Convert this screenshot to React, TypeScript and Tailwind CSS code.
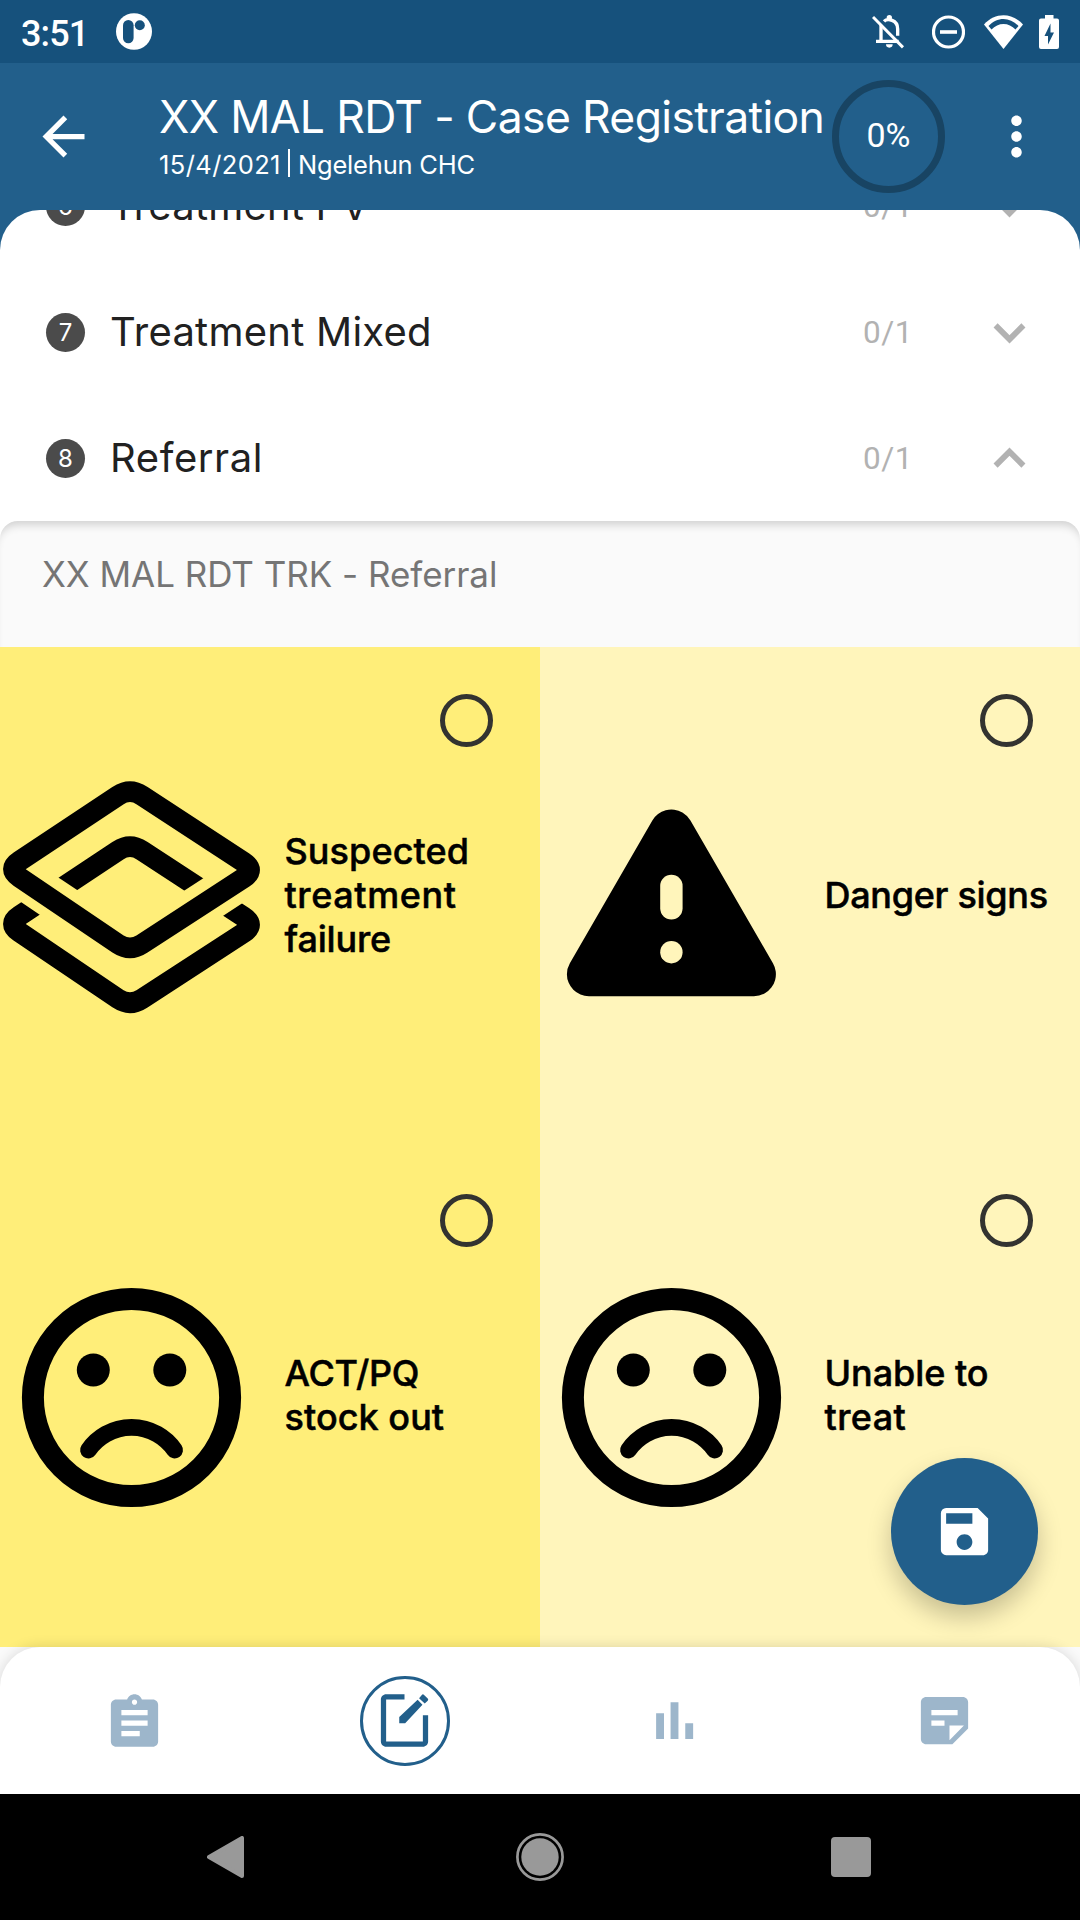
import type { ReactNode } from 'react';
import { MdArrowBack, MdMoreVert, MdSave } from 'react-icons/md';

function StatusBar() {
  return (
    <div className="flex h-[63px] items-center bg-[#16517c] pr-[21px] pl-[21px] text-white">
      <span className="mt-[5px] w-[95px] font-[Roboto,sans-serif] text-[36px] leading-[42px] font-medium tracking-[-0.900px]">3:51</span>
      <svg className="h-[37px] w-[36px]" viewBox="0 0 36 37">
        <ellipse cx="18" cy="18.5" rx="18" ry="18.3" fill="#fff" />
        <rect x="7" y="7" width="10.6" height="23.3" rx="5.3" fill="#16517c" />
        <circle cx="23.8" cy="12.3" r="5" fill="#16517c" />
      </svg>
      <div className="ml-auto flex items-center">
        <svg className="mr-[28px] h-[34px] w-[32px]" viewBox="0 0 96 102" fill="none" stroke="#fff">
          <path d="M27 30V78M12 79H80" strokeWidth="10" />
          <path d="M36 19C46 9 77 14 77 42V62" strokeWidth="10" />
          <path d="M3 6L93 97" strokeWidth="9" />
          <circle cx="52" cy="8" r="8" fill="#fff" stroke="none" />
          <path d="M42 88h20a10 10 0 0 1-20 0z" fill="#fff" stroke="none" />
        </svg>
        <svg className="mr-[19px] h-[34px] w-[33px]" viewBox="0 0 33 34" fill="none" stroke="#fff">
          <circle cx="16.5" cy="17" r="15" strokeWidth="3.2" />
          <path d="M8 17h17" strokeWidth="3.6" />
        </svg>
        <svg className="mr-[16px] h-[34px] w-[39px]" viewBox="0 0 39 34">
          <path d="M0 9.5C11 -2.8 28 -2.8 39 9.5L19.5 34z" fill="#fff" />
          <path d="M4.500 11C13 1.500 26 1.500 34.500 11L31.500 14.500C25 7 14 7 7.500 14.500z" fill="#16517c" />
        </svg>
        <svg className="h-[34px] w-[20px]" viewBox="0 0 20 34">
          <path d="M6 0h8.500v3.500H18q2 0 2 2V32q0 2-2 2H2q-2 0-2-2V5.500q0-2 2-2H6z" fill="#fff" />
          <path d="M11.500 8.500L5.500 21H9v8.500L15 17.500h-3.500z" fill="#16517c" />
        </svg>
      </div>
    </div>
  );
}

function Header() {
  return (
    <header className="flex h-[147px] text-white">
      <MdArrowBack className="mt-[42px] ml-[32px] size-[63px] shrink-0" />
      <div className="mt-[27px] ml-[64px] w-[674px] shrink-0">
        <h1 className="text-[44.500px] leading-[55px] tracking-[-0.660px] whitespace-nowrap">XX MAL RDT - Case Registration</h1>
        <div className="mt-[4px] flex text-[25.500px] leading-[32px] whitespace-nowrap">
          <span className="w-[126px] tracking-[0.400px]">15/4/2021</span>
          <span className="mr-[8px] ml-[2.500px] h-[28px] w-[2.500px] bg-white" />
          <span className="tracking-[-0.200px]">Ngelehun CHC</span>
        </div>
      </div>
      <div className="mt-[17px] -ml-px flex size-[113px] shrink-0 items-center justify-center rounded-full border-[7px] border-[#184463] font-[Roboto,sans-serif] text-[34px]">
        <span className="-mt-[2px]">0%</span>
      </div>
      <MdMoreVert className="mt-[42px] ml-[39.500px] size-[63px] shrink-0" />
    </header>
  );
}

function StageRow({ index, title, open, titleClass }: { index: number; title: string; open?: boolean; titleClass: string }) {
  return (
    <div className="flex h-[126px] shrink-0 items-center pr-[39px] pl-[46px]">
      <span className="flex size-[39px] items-center justify-center rounded-full bg-[#4b4b4b] text-[24px] leading-none text-white">
        <span className="mt-[2px]">{index}</span>
      </span>
      <span className={`ml-[25px] flex-1 text-[40px] text-[#212121] ${titleClass}`}>{title}</span>
      <span className="mt-[2px] w-[115px] font-[Roboto,sans-serif] text-[31.500px] tracking-[0.500px] text-[#b2b2b2]">0/1</span>
      <svg className="size-[63px]" viewBox="0 0 24 24" fill="none" stroke="#b2b2b2" strokeWidth="2.2">
        <path d={open ? 'M6.700 14.700L12 9.400l5.300 5.300' : 'M6.700 9.300L12 14.600l5.300-5.300'} />
      </svg>
    </div>
  );
}

function LayersIcon() {
  const diamond = 'M118 29.600Q130 21.700 142 29.600L243.700 96.100Q255.700 104 243.700 111.900L142 178Q130 185.900 118 178L19.300 111.200Q7.300 103 19.300 95.100Z';
  return (
    <svg className="size-[263px] shrink-0" viewBox="0 0 263 263" fill="none" stroke="#000" strokeWidth="20.500">
      <clipPath id="chevronArea">
        <path d="M-10 66L130.600 159.500 270 69V-50H-10z" />
      </clipPath>
      <clipPath id="baseArea">
        <path d="M-10 115L130.600 210.500 270 119V263H-10z" />
      </clipPath>
      <path d={diamond} />
      <g clipPath="url(#chevronArea)">
        <path d={diamond} transform="translate(0 55)" />
      </g>
      <g clipPath="url(#baseArea)">
        <path d={diamond} transform="translate(0 54.800)" />
      </g>
    </svg>
  );
}

function WarningIcon() {
  return (
    <svg className="size-[263px] shrink-0" viewBox="0 0 263 263">
      <path d="M131.400 65.500L213.900 208.200H48.900z" stroke="#000" strokeWidth="44" strokeLinejoin="round" />
      <rect x="120.200" y="108.800" width="22.400" height="44.700" rx="11.200" fill="#fff5bb" />
      <circle cx="131.400" cy="186.200" r="11.200" fill="#fff5bb" />
    </svg>
  );
}

function SadFaceIcon() {
  return (
    <svg className="size-[263px] shrink-0" viewBox="0 0 263 263">
      <circle cx="131.500" cy="131.500" r="98.600" fill="none" stroke="#000" strokeWidth="22" />
      <circle cx="93.300" cy="104" r="16.500" />
      <circle cx="169.800" cy="104" r="16.500" />
      <path d="M88.500 184A52.300 52.300 0 0 1 174.600 184" fill="none" stroke="#000" strokeWidth="16.800" strokeLinecap="round" />
    </svg>
  );
}

function OptionCard({ icon, tone, children }: { icon: ReactNode; tone: string; children: ReactNode }) {
  return (
    <div className={`relative flex h-[500px] items-center ${tone}`}>
      {icon}
      <div className="-mt-[4px] ml-[21.500px] text-[36px] leading-[44px] font-medium text-black [-webkit-text-stroke:0.5px_#000]">{children}</div>
      <span className="absolute top-[47px] right-[47px] size-[53px] rounded-full border-[5px] border-[#333330]" />
    </div>
  );
}

function BottomNav() {
  return (
    <div className="h-[147px] bg-[#fafafa]">
      <nav className="relative grid h-full grid-cols-4 place-items-center rounded-t-[40px] bg-white text-[#9db6cb] shadow-[0_0_14px_rgba(0,0,0,0.14)]">
        <svg className="-ml-px size-[63px]" viewBox="0 -1 24 24" fill="currentColor">
          <path d="M19 3h-4.180C14.400 1.840 13.300 1 12 1c-1.300 0-2.400.84-2.820 2H5c-1.100 0-2 .9-2 2v14c0 1.100.9 2 2 2h14c1.100 0 2-.9 2-2V5c0-1.100-.9-2-2-2zm-7 0c.55 0 1 .45 1 1s-.45 1-1 1-1-.45-1-1 .45-1 1-1zm2 14H7v-2h7v2zm3-4H7v-2h10v2zm0-4H7V7h10v2z" />
        </svg>
        <div className="flex size-[90px] items-center justify-center rounded-full border-[3px] border-[#225f8b] text-[#225f8b]">
          <svg className="size-[63px] shrink-0 -translate-x-px" viewBox="0 -1 24 24" fill="currentColor">
            <path d="M12 1v2H5v16h14V9h2v10c0 1.100-.9 2-2 2H5c-1.100 0-2-.9-2-2V3c0-1.100.9-2 2-2z" />
            <path d="M10 9.700L17 3.050 18.850 5 12.250 12H10zM17.550 2.500L18.600 1.250Q19 .8 19.450 1.250L20.850 2.650Q21.250 3.050 20.850 3.500L19.700 4.550z" />
          </svg>
        </div>
        <svg className="-ml-px size-[63px]" viewBox="0 0 24 24" fill="currentColor">
          <path d="M5 9.200h3V19H5zM10.500 5h3v14h-3zM16.100 13h3v6h-3z" />
        </svg>
        <svg className="-ml-px size-[63px]" viewBox="0 0 24 24" fill="currentColor" fillRule="evenodd">
          <path d="M5 3h14c1.100 0 2 .9 2 2v10l-6 6H5c-1.100 0-2-.9-2-2V5c0-1.100.9-2 2-2zM7 8v2h10V8zM7 12v2h5v-2zM13.900 13.900v5.600l5.500-5.600z" />
        </svg>
      </nav>
    </div>
  );
}

function SystemNav() {
  return (
    <div className="grid h-[126px] grid-cols-[451px_178px_451px] place-items-center bg-black">
      <svg className="h-[42px] w-[37px]" viewBox="0 0 37 42">
        <path d="M2 21L35 2V40z" fill="#999" stroke="#999" strokeWidth="4" strokeLinejoin="round" />
      </svg>
      <svg className="size-[48px]" viewBox="0 0 48 48">
        <circle cx="24" cy="24" r="22.600" fill="none" stroke="#999" strokeWidth="2.700" />
        <circle cx="24" cy="24" r="18.700" fill="#999" />
      </svg>
      <span className="mr-[7px] size-[40px] rounded-[4px] bg-[#999]" />
    </div>
  );
}

export default function App() {
  return (
    <div className="relative flex h-[1920px] w-[1080px] flex-col overflow-hidden bg-[#225f8b] font-[Inter,Roboto,sans-serif]">
      <StatusBar />
      <Header />
      <div className="flex h-[311px] flex-col justify-end overflow-hidden rounded-t-[40px] bg-white">
        <StageRow index={6} title="Treatment PV" titleClass="tracking-[0.200px]" />
        <StageRow index={7} title="Treatment Mixed" titleClass="tracking-[0.250px]" />
        <StageRow index={8} title="Referral" titleClass="tracking-[0.600px]" open />
      </div>
      <div className="bg-white">
        <div className="h-[126px] rounded-t-[18px] bg-[#fafafa] pt-[31px] pl-[42px] text-[35px] leading-[44px] tracking-[-0.040px] text-[#757575] shadow-[inset_0_9px_8px_-5px_rgba(0,0,0,0.16)]">
          XX MAL RDT TRK - Referral
        </div>
      </div>
      <div className="grid grid-cols-2">
        <OptionCard tone="bg-[#ffee79]" icon={<LayersIcon />}>
          <span className="block tracking-[0.100px]">Suspected</span>
          <span className="block tracking-[0.600px]">treatment</span>
          <span className="block tracking-[-0.150px]">failure</span>
        </OptionCard>
        <OptionCard tone="bg-[#fff5bb]" icon={<WarningIcon />}>
          <span className="block tracking-[-0.300px]">Danger signs</span>
        </OptionCard>
        <OptionCard tone="bg-[#ffee79]" icon={<SadFaceIcon />}>
          <span className="block tracking-[-0.300px]">ACT/PQ</span>
          <span className="block tracking-[0.050px]">stock out</span>
        </OptionCard>
        <OptionCard tone="bg-[#fff5bb]" icon={<SadFaceIcon />}>
          <span className="block tracking-[-0.050px]">Unable to</span>
          <span className="block tracking-[0.400px]">treat</span>
        </OptionCard>
      </div>
      <BottomNav />
      <SystemNav />
      <button className="absolute right-[42px] bottom-[315px] flex size-[147px] items-center justify-center rounded-full bg-[#225f8b] text-white shadow-[0_12px_24px_rgba(0,0,0,0.22)]">
        <MdSave className="size-[63px]" />
      </button>
    </div>
  );
}
